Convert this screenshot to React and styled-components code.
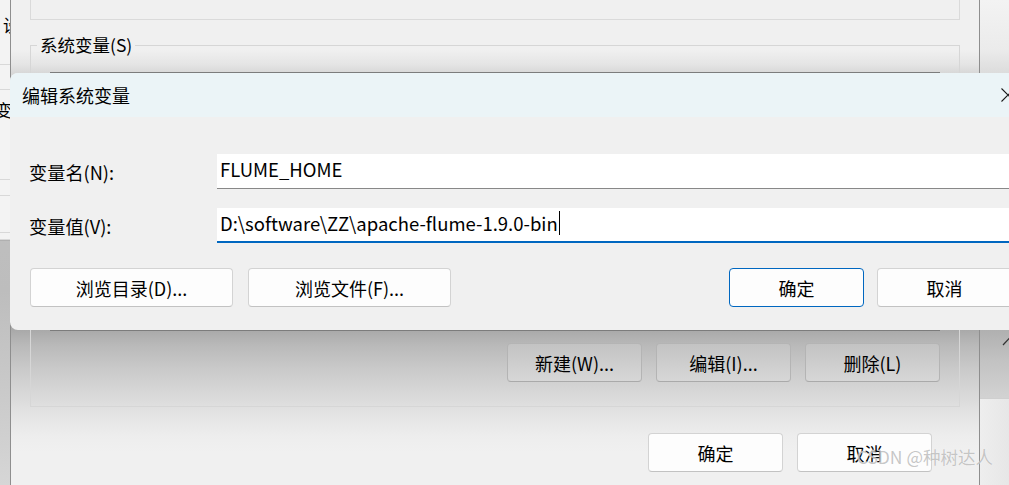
import React from 'react';
import styled, { createGlobalStyle } from 'styled-components';

const GlobalStyle = createGlobalStyle`
  html, body {
    margin: 0;
    padding: 0;
  }
  body {
    width: 1009px;
    height: 485px;
    overflow: hidden;
    font-family: "Noto Sans CJK SC", "Liberation Sans", sans-serif;
    color: #000;
  }
`;

// The desktop everything sits on
const Desktop = styled.div`
  position: relative;
  width: 1009px;
  height: 485px;
  overflow: hidden;
  background: linear-gradient(180deg, #c4c4c4 0%, #bdbdbd 60%, #d6d6d6 100%);
`;

// Window far behind, only a sliver shows on the left
const BackWindow = styled.div`
  position: absolute;
  left: -200px;
  top: 0;
  width: 210px;
  height: 240px;
  background: #f3f3f3;
  border-bottom: 1px solid #b0b0b0;
  display: flex;
  flex-direction: column;
  font-size: 17px;
  line-height: 17px;
`;

const BackRow = styled.div`
  box-sizing: border-box;
  height: ${p => p.$h}px;
  padding: ${p => p.$top || 0}px 0 0 ${p => p.$indent || 203}px;
  border-bottom: 1px solid #d8d8d8;
  white-space: nowrap;
`;

// Environment variables window (behind the dialog); its background
// carries the dialog's drop shadow (window top sits at y = -60)
const EnvWindow = styled.div`
  position: absolute;
  left: 10px;
  top: -60px;
  width: 970px;
  height: 620px;
  box-sizing: border-box;
  background: linear-gradient(
    180deg,
    #f0f0f0 0px,
    #f0f0f0 110px,
    #e5e5e5 124px,
    #d8d8d8 133px,
    #a9a9a9 390px,
    #b9b9b9 405px,
    #c9c9c9 428px,
    #d7d7d7 452px,
    #e4e4e4 475px,
    #ededed 495px,
    #f0f0f0 512px
  );
  border-left: 1px solid #8e8e8e;
  border-right: 1px solid #8e8e8e;
  padding: 0 19px;
  display: flex;
  flex-direction: column;
  font-size: 18px;
`;

const UserGroup = styled.div`
  height: 79px;
  border: 1px solid #dadada;
  border-top: none;
`;

const GroupBox = styled.fieldset`
  margin: 13px 0 0;
  padding: 0 19px 24px 6px;
  border: 1px solid #d6d6d6;
  min-inline-size: 0;
  display: flex;
  flex-direction: column;
`;

const Legend = styled.legend`
  padding: 0 3px;
  font-size: 17.5px;
  line-height: 24px;
`;

const ListBox = styled.div`
  margin: 15px 0 0 13px;
  height: 257px;
  background: #fff;
  border: 1px solid #7c7c7c;
`;

const ButtonRow = styled.div`
  display: flex;
  justify-content: flex-end;
  gap: ${p => p.$gap || 14}px;
  margin-top: ${p => p.$top || 0}px;
  padding-right: ${p => p.$right || 0}px;
`;

const WinButton = styled.button`
  box-sizing: border-box;
  width: ${p => p.$w || 135}px;
  height: 39px;
  padding: 0;
  background: ${p => (p.$shaded ? 'linear-gradient(180deg, #c3c3c3, #d7d7d7)' : '#fdfdfd')};
  border: 1px solid ${p => (p.$primary ? '#0067c0' : p.$shaded ? '#b4b4b4' : '#d3d3d3')};
  border-bottom-color: ${p => (p.$primary ? '#0067c0' : p.$shaded ? '#aaaaaa' : '#c2c2c2')};
  border-radius: 4px;
  font-family: inherit;
  font-size: 18px;
  color: #000;
`;

// Thin window to the right
const SideWindow = styled.div`
  position: absolute;
  left: 980px;
  top: 0;
  width: 40px;
  height: 485px;
  background: linear-gradient(90deg, #eeeeee, #e4e4e4);
  display: flex;
  flex-direction: column;
`;

const SideTop = styled.div`
  box-sizing: border-box;
  height: 399px;
  border-bottom: 1px solid #cfcfcf;
  background: linear-gradient(
    180deg,
    #f3f3f3 0px,
    #ebebeb 50px,
    #dcdcdc 73px,
    #b0b0b0 330px,
    #c2c2c2 360px,
    #d3d3d3 399px
  );
  display: flex;
  flex-direction: column;
  justify-content: flex-end;
  padding: 0 0 52px 22px;
`;

// Edit dialog
const Dialog = styled.section`
  position: absolute;
  z-index: 2;
  left: 10px;
  top: 73px;
  width: 1022px;
  border-radius: 8px;
  overflow: hidden;
  background: #f0f0f0;
  font-size: 18px;
`;

const TitleBar = styled.header`
  height: 44px;
  display: flex;
  align-items: center;
  justify-content: space-between;
  padding: 0 1px 0 12px;
  background: #ebf4f7;
`;

const Title = styled.h1`
  margin: 0;
  font-size: 18px;
  font-weight: 400;
`;

const CloseButton = styled.div`
  width: 46px;
  height: 44px;
  display: flex;
  align-items: center;
  justify-content: center;
`;

const Body = styled.div`
  padding: 37px 20px 23px;
  display: flex;
  flex-direction: column;
`;

const Form = styled.div`
  display: flex;
  flex-direction: column;
  gap: 19px;
`;

const FieldRow = styled.div`
  display: grid;
  grid-template-columns: 187px 1fr;
  align-items: center;
`;

const Label = styled.label`
  margin-left: -1px;
  font-size: 18.2px;
`;

const TextField = styled.div`
  box-sizing: border-box;
  height: 35px;
  display: flex;
  align-items: center;
  padding: 0 0 ${p => (p.$focused ? 3 : 4)}px 3px;
  background: #fff;
  border-bottom: ${p => (p.$focused ? '2px solid #0067c0' : '1px solid #888')};
  font-size: 18.5px;
  white-space: nowrap;
`;

const Caret = styled.span`
  display: inline-block;
  width: 0;
  height: 24px;
  margin-left: 1px;
  border-left: 1px solid #000;
`;

const Actions = styled.div`
  margin-top: 25px;
  display: flex;
  justify-content: space-between;
`;

const ActionGroup = styled.div`
  display: flex;
  gap: ${p => p.$gap}px;
`;

const Watermark = styled.div`
  position: absolute;
  z-index: 3;
  right: 16px;
  top: 444px;
  font-size: 17.5px;
  color: rgba(150, 150, 150, 0.55);
  text-shadow: 0 0 1px rgba(255, 255, 255, 0.9);
  white-space: nowrap;
`;

export default function App() {
  return (
    <Desktop>
      <GlobalStyle />

      <BackWindow>
        <BackRow $h={65} $top={16}>设置</BackRow>
        <BackRow $h={25} />
        <BackRow $h={90} $top={11} $indent={195}>变量</BackRow>
        <BackRow $h={16} />
        <BackRow $h={37} />
        <BackRow $h={7} />
      </BackWindow>

      <SideWindow>
        <SideTop>
          <svg width="16" height="10" viewBox="0 0 16 10">
            <polyline points="1,9 8,1.5 15,9" fill="none" stroke="#333" strokeWidth="1.2" />
          </svg>
        </SideTop>
      </SideWindow>

      <EnvWindow>
        <UserGroup />
        <GroupBox>
          <Legend>系统变量(S)</Legend>
          <ListBox />
          <ButtonRow $top={12}>
            <WinButton $shaded>新建(W)...</WinButton>
            <WinButton $shaded>编辑(I)...</WinButton>
            <WinButton $shaded>删除(L)</WinButton>
          </ButtonRow>
        </GroupBox>
        <ButtonRow $top={26} $right={28}>
          <WinButton>确定</WinButton>
          <WinButton>取消</WinButton>
        </ButtonRow>
      </EnvWindow>

      <Dialog>
        <TitleBar>
          <Title>编辑系统变量</Title>
          <CloseButton>
            <svg width="14" height="14" viewBox="0 0 14 14">
              <path d="M0.5 0.5 L13.5 13.5 M13.5 0.5 L0.5 13.5" stroke="#1b1b1b" strokeWidth="1.1" />
            </svg>
          </CloseButton>
        </TitleBar>
        <Body>
          <Form>
            <FieldRow>
              <Label>变量名(N):</Label>
              <TextField>FLUME_HOME</TextField>
            </FieldRow>
            <FieldRow>
              <Label>变量值(V):</Label>
              <TextField $focused>
                D:\software\ZZ\apache-flume-1.9.0-bin
                <Caret />
              </TextField>
            </FieldRow>
          </Form>
          <Actions>
            <ActionGroup $gap={15}>
              <WinButton $w={203}>浏览目录(D)...</WinButton>
              <WinButton $w={203}>浏览文件(F)...</WinButton>
            </ActionGroup>
            <ActionGroup $gap={13}>
              <WinButton $primary>确定</WinButton>
              <WinButton>取消</WinButton>
            </ActionGroup>
          </Actions>
        </Body>
      </Dialog>

      <Watermark>CSDN @种树达人</Watermark>
    </Desktop>
  );
}
